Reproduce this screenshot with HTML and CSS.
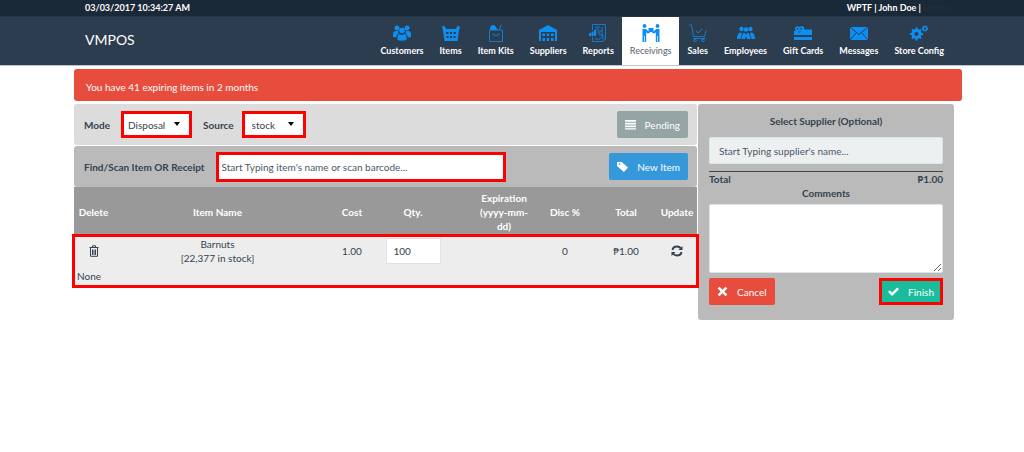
FILE: index.html
```html
<!DOCTYPE html>
<html lang="en">
<head>
<meta charset="utf-8">
<title>VMPOS</title>
<link rel="stylesheet" href="styles.css">
</head>
<body>
<div class="topbar"><span>03/03/2017 10:34:27 AM</span><span>WPTF | John Doe | <a class="logout" href="#">Logout</a></span></div>
<header class="header">
  <a class="brand" href="#">VMPOS</a>
  <nav class="nav">
    <a href="#"><svg viewBox="0 0 18 18"><circle cx="9" cy="6.500" r="2.800"/><circle cx="4" cy="4" r="2.500"/><circle cx="14" cy="4" r="2.500"/><path d="M4.500 16v-2.500q0-3.500 2.500-3.500l2 1.500 2-1.500q2.500 0 2.500 3.500V16q-4.500 1.500-9 0zM0 13v-3q0-3 3-3h2q0 2 1 2.500-2.500.5-2.700 4zM18 13v-3q0-3-3-3h-2q0 2-1 2.500 2.500.5 2.700 4z"/></svg>Customers</a>
    <a href="#"><svg viewBox="0 0 18 18"><path fill-rule="evenodd" d="M0 3l2-1.500L4.500 5h9L16 1.500 18 3l-1 3.500L15.500 17h-13L1 6.500zM4 8v2h2.500V8zm4 0v2h2V8zm3.500 0v2H14V8zM4.500 12v2h2v-2zm3.500 0v2h2v-2zm3.500 0v2h2v-2z"/></svg>Items</a>
    <a href="#"><svg viewBox="0 0 18 18"><path class="thin" d="M2.500 6h13v11.500h-13zM6 9q0 2.500 3 2.500t3-2.500M12.500 6l1.500-5.500"/><path d="M3 6V3.500L5 1l3 .5L9.500 4 11 6z"/></svg>Item Kits</a>
    <a href="#"><svg viewBox="0 0 18 18"><path fill-rule="evenodd" d="M0 6l9-5 9 5v11h-2V8H2v9H0z"/><path d="M3.500 9.500H6V12H3.500zm4.200 0h2.500V12H7.700zm4.300 0h2.500V12H12zM3.500 14H6v3H3.500zm4.200 0h2.500v3H7.700zm4.300 0h2.500v3H12z"/></svg>Suppliers</a>
    <a href="#"><svg viewBox="0 0 18 18"><path class="thin" d="M3.500 6V.5h13V15H15q0 2.500-2 2.500H3.500V13M6 3h5M6 5h4M8 7h5M8 9h3M6 15h5M13 3v9M10 11h4v3h-3"/><path d="M0 9h2v3H0zM2.500 7.500h2V12h-2zM5 6h2v6H5z"/></svg>Reports</a>
    <a class="active" href="#"><svg viewBox="0 0 18 18"><circle cx="2.500" cy="2" r="1.900"/><circle cx="15.500" cy="2" r="1.900"/><path d="M.5 5h3.300l2.700 2.500 1.500-.5v1.500l-2 1-1.800-1V18H3v-6h-.7v6H.5zM17.500 5h-3.300l-2.700 2.500L10 7v1.500l2 1 1.800-1V18H15v-6h.7v6h1.800z"/><path d="M6.500 4h5v4h-5z"/></svg>Receivings</a>
    <a href="#"><svg viewBox="0 0 18 18"><path class="thin" d="M0 1h2.500l2 11.500h11L17 6.500M4.500 14.500h12M7 7l2 2 4-4"/><circle class="thin" cx="6" cy="16.500" r="1.300"/><circle class="thin" cx="14" cy="16.500" r="1.300"/></svg>Sales</a>
    <a href="#"><svg viewBox="0 0 18 18"><circle cx="4.500" cy="5" r="2.200"/><circle cx="13.500" cy="5" r="2.200"/><circle cx="9" cy="5.500" r="2.300"/><path d="M0 15q0-5 3-6.500l2 .5-1.500 6zM18 15q0-5-3-6.500l-2 .5 1.500 6zM4.500 15q.5-5 2.500-6.500l2 2 2-2q2 1.500 2.500 6.500h-3.500L9 12l-1 3z"/></svg>Employees</a>
    <a href="#"><svg viewBox="0 0 18 18"><path fill-rule="evenodd" d="M0 7h1.500L1 4l2-2 2.500 1L8 2l2.500 1.500L10 5.500h8V11H0zM3 4v1.500h1.500V4zm3.500 0v1.500H8V4zM4 7.500L5.500 9 7 7.500z"/><path d="M0 13h18v3H0z"/></svg>Gift Cards</a>
    <a href="#"><svg viewBox="0 0 18 18"><path d="M0 3h18v13H0z"/><path class="cut" d="M0 3l9 7.500L18 3M0 16l6.500-7.500M18 16l-6.500-7.500"/></svg>Messages</a>
    <a href="#"><svg viewBox="0 0 18 18"><circle class="gear" cx="6.500" cy="10" r="3.600"/><path class="teeth" d="M6.500 3.500v2.500M6.500 14v2.500M0 10h2.500M10.500 10H13M2 5.500l1.800 1.800M9.200 12.700l1.800 1.800M11 5.500L9.200 7.300M3.800 12.700L2 14.500"/><circle class="gear-small" cx="15" cy="4.500" r="2"/></svg>Store Config</a>
  </nav>
</header>
<main class="page">
  <div class="alert" role="alert">You have 41 expiring items in 2 months</div>
  <div class="columns">
    <section class="register">
      <div class="bar bar-mode">
        <label for="mode">Mode</label>
        <span class="picker"><select id="mode"><option>Disposal</option></select></span>
        <label for="source">Source</label>
        <span class="picker picker-source"><select id="source"><option>stock</option></select></span>
        <button class="btn btn-gray"><svg viewBox="0 0 12 12"><path d="M0 1h12v2H0zM0 4h12v2H0zM0 7h12v2H0zM0 10h12v1.500H0z"/></svg>Pending</button>
      </div>
      <div class="bar bar-find">
        <label for="find">Find/Scan Item OR Receipt</label>
        <input class="find" id="find" type="text" placeholder="Start Typing item's name or scan barcode...">
        <button class="btn btn-blue"><svg viewBox="0 0 12 12"><path fill-rule="evenodd" d="M0 1h5l7 6-4.500 5L0 5.500zM2 2.500V4h1.500V2.500z"/></svg>New Item</button>
      </div>
      <table class="items">
        <colgroup><col class="c-delete"><col><col class="c-cost"><col class="c-qty"><col class="c-exp"><col class="c-disc"><col class="c-total"><col class="c-update"></colgroup>
        <thead><tr><th>Delete</th><th>Item Name</th><th>Cost</th><th class="qty">Qty.</th><th class="exp">Expiration (yyyy-mm-dd)</th><th>Disc %</th><th>Total</th><th>Update</th></tr></thead>
        <tbody>
          <tr>
            <td><button class="icon" aria-label="Delete"><svg viewBox="0 0 12 12"><path class="line" d="M1.500 2.500h9M4.500 2V.8h3V2M2.500 3v8.300h7V3M4.500 4.500V10M6 4.500V10M7.500 4.500V10"/></svg></button></td>
            <td>Barnuts<br>[22,377 in stock]</td>
            <td>1.00</td>
            <td class="qty"><input class="qty-input" type="text" value="100" aria-label="Quantity"></td>
            <td></td><td>0</td><td>₱1.00</td>
            <td><button class="icon" aria-label="Update"><svg viewBox="0 0 12 12"><path class="line arrows" d="M1.500 5Q2 1.500 6 1.500q2.500 0 4 2M10.500 7Q10 10.500 6 10.500q-2.500 0-4-2"/><path d="M11.500 1v4h-4zM.5 11V7h4z"/></svg></button></td>
          </tr>
          <tr><td class="note" colspan="8">None</td></tr>
        </tbody>
      </table>
    </section>
    <aside class="side">
      <label class="side-title" for="supplier">Select Supplier (Optional)</label>
      <input class="supplier" id="supplier" type="text" placeholder="Start Typing supplier's name...">
      <div class="total"><span>Total</span><span>₱1.00</span></div>
      <label class="comments-label" for="comments">Comments</label>
      <textarea class="comments" id="comments"></textarea>
      <div class="actions">
        <button class="btn btn-red"><svg viewBox="0 0 12 12"><path d="M2.700.7L6 4 9.300.7l2 2L8 6l3.300 3.300-2 2L6 8l-3.300 3.300-2-2L4 6 .7 2.700z"/></svg>Cancel</button>
        <button class="btn btn-green"><svg viewBox="0 0 12 12"><path d="M0 6.500l2-2 2.500 2.500L10 1.500l2 2-7.500 7.500z"/></svg>Finish</button>
      </div>
    </aside>
  </div>
</main>
</body>
</html>
```
FILE: styles.css
```css
* { box-sizing: border-box; }
body { margin: 0; background: #fff; color: #34434f; font: 10px/14px Lato, sans-serif; }
a { color: inherit; text-decoration: none; }
button, input, select, textarea { font: inherit; color: inherit; margin: 0; }
svg { display: block; fill: currentColor; }

.topbar { display: flex; justify-content: space-between; height: 17px; padding: 0 73px 0 85px; background: #1a2938; border-bottom: 1px solid #243444; color: #fff; font-size: 9px; font-weight: 700; line-height: 16px; }
.logout { color: #222d38; }
.header { display: flex; justify-content: space-between; height: 49px; padding: 0 72px 0 85px; background: #2d3d50; border-bottom: 1px solid #bcc4cc; color: #fff; }
.brand { padding-top: 14px; font-size: 14px; line-height: 18px; }
.nav { display: flex; }
.nav a { display: flex; flex-direction: column; align-items: center; padding: 7px 8px 0; font-size: 9px; font-weight: 700; line-height: 14px; }
.nav svg { width: 18px; height: 18px; margin-bottom: 2px; color: #0d8ff2; }
.nav .active { background: #fff; color: #56606a; font-weight: 400; }
.thin { fill: none; stroke: currentColor; stroke-width: 1; opacity: .75; }
.cut { fill: none; stroke: #2d3d50; stroke-width: 1; }
.gear { fill: none; stroke: currentColor; stroke-width: 3; }
.teeth { fill: none; stroke: currentColor; stroke-width: 2; }
.gear-small { fill: none; stroke: currentColor; stroke-width: 2; stroke-dasharray: 1.500 .3; }

.page { margin: 3px 62px 0 74px; }
.alert { padding: 11px 12px 7px; background: #e84c3d; border-radius: 3px; color: #fff; }
.columns { display: grid; grid-template-columns: 1fr 256px; align-items: start; gap: 1px; margin: 3px 8px 0 0; }
.bar { display: flex; align-items: center; height: 41px; padding: 0 9px 0 10px; border-radius: 3px; font-weight: 700; }
.bar .btn { margin-left: auto; }
.bar-mode { background: #dcdcdc; }
.bar-find { margin-top: 1px; background: #bababa; }
.picker { position: relative; width: 71px; margin: 0 11px; font-weight: 400; }
.picker-source { width: 64px; margin: 0 8px; }
.picker select { display: block; width: 100%; height: 27px; padding: 0 4px; appearance: none; border: 3px solid #f00; border-radius: 0; background: #fff; }
.picker-source select { padding-left: 7px; }
.picker::after { content: ""; position: absolute; right: 12px; top: 11px; border: 3px solid transparent; border-top: 4px solid #000; border-bottom: 0; pointer-events: none; }
.find { width: 290px; height: 30px; margin-left: 11px; padding: 0 3px; border: 3px solid #f00; background: #fff; font-weight: 400; }
::placeholder { color: #4a5864; opacity: 1; }
.btn { display: flex; align-items: center; gap: 9px; height: 27px; padding: 0 8px; border: 0; border-radius: 2px; color: #fff; font-weight: 400; }
.btn svg { width: 11px; height: 11px; }
.btn-gray { background: #95a5a5; }
.btn-blue { background: #3598db; }
.btn-red { background: #e84c3d; }
.btn-green { padding: 0 6px; border: 3px solid #f00; border-radius: 0; background: #1abc9c; }

.items { position: relative; z-index: 1; width: 100%; border-collapse: collapse; table-layout: fixed; text-align: center; }
.items th { height: 49px; padding: 0; background: #999; color: #fff; font-weight: 700; }
.items .exp { padding: 0 6px; }
.items td { height: 30px; padding: 0; background: #ededed; }
.items tbody { outline: 3px solid #f00; outline-offset: -1px; }
.items .note { height: 20px; padding-left: 3px; text-align: left; }
.items .qty { padding-right: 29px; }
.c-delete { width: 39px; }
.c-cost { width: 60px; }
.c-qty { width: 91px; }
.c-exp { width: 62px; }
.c-disc { width: 60px; }
.c-total { width: 62px; }
.c-update { width: 40px; }
.qty-input { display: block; width: 55px; height: 26px; margin: 0 auto; padding: 0 7px; border: 1px solid #dce4ec; background: #fff; }
.icon { display: block; margin: 0 auto; padding: 0; border: 0; background: none; }
.icon svg { width: 12px; height: 12px; }
.line { fill: none; stroke: currentColor; stroke-width: 1; }
.arrows { stroke-width: 2; }

.side { display: flex; flex-direction: column; padding: 10px 11px 15px; background: #bababa; border-radius: 3px; }
.side-title { font-weight: 700; text-align: center; }
.supplier { height: 27px; margin-top: 9px; padding: 0 9px; border: 1px solid #dce4ec; border-radius: 2px; background: #ecf0f1; }
.total { display: flex; justify-content: space-between; margin-top: 7px; border-top: 1px solid #444; font-weight: 700; }
.comments-label { font-weight: 700; text-align: center; }
.comments { height: 69px; margin-top: 4px; border: 1px solid #dce4ec; border-radius: 2px; background: #fff; resize: vertical; }
.actions { display: flex; justify-content: space-between; margin-top: 5px; }
```
